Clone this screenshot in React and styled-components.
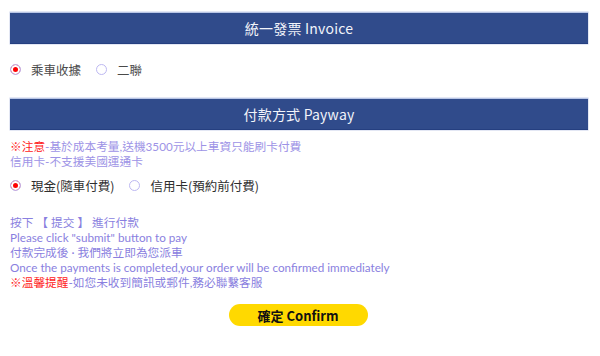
import React, { useState } from "react";
import styled, { createGlobalStyle } from "styled-components";

const GlobalStyle = createGlobalStyle`
    html, body {
        margin: 0;
        padding: 0;
        background: #fff;
    }
    body {
        font-family: Lato, "Noto Sans CJK TC", sans-serif;
    }
`;

const App = () => {
    const [invoice, setInvoice] = useState("receipt");
    const [payway, setPayway] = useState("cash");

    return (
        <>
            <GlobalStyle />
            <Page>
                <SectionBar>統一發票 Invoice</SectionBar>
                <RadioRow>
                    <RadioLabel $gap={15} onClick={() => setInvoice("receipt")}>
                        <RadioDot checked={invoice === "receipt"} />
                        <RadioText>乘車收據</RadioText>
                    </RadioLabel>
                    <RadioLabel onClick={() => setInvoice("duplicate")}>
                        <RadioDot checked={invoice === "duplicate"} />
                        <RadioText>二聯</RadioText>
                    </RadioLabel>
                </RadioRow>

                <SectionBar $top={19}>付款方式 Payway</SectionBar>
                <NoteBlock>
                    <Line><Alert>※注意</Alert>-基於成本考量,送機3500元以上車資只能刷卡付費</Line>
                    <Line>信用卡-不支援美國運通卡</Line>
                </NoteBlock>
                <RadioRow $tight>
                    <RadioLabel $gap={15} onClick={() => setPayway("cash")}>
                        <RadioDot checked={payway === "cash"} />
                        <RadioText $dark>現金(隨車付費)</RadioText>
                    </RadioLabel>
                    <RadioLabel onClick={() => setPayway("card")}>
                        <RadioDot checked={payway === "card"} />
                        <RadioText $dark>信用卡(預約前付費)</RadioText>
                    </RadioLabel>
                </RadioRow>

                <InfoBlock>
                    <Line>按下 【 提交 】 進行付款</Line>
                    <Line>Please click "submit" button to pay</Line>
                    <Line>付款完成後 · 我們將立即為您派車</Line>
                    <Line>Once the payments is completed,your order will be confirmed immediately</Line>
                    <Line><Alert>※溫馨提醒</Alert>-如您未收到簡訊或郵件,務必聯繫客服</Line>
                </InfoBlock>

                <ButtonRow>
                    <ConfirmButton type="button">確定 Confirm</ConfirmButton>
                </ButtonRow>
            </Page>
        </>
    );
};

const Page = styled.div`
    padding: 12px 12px 0 10px;
    display: flex;
    flex-direction: column;
`;

const SectionBar = styled.div`
    margin-top: ${(p) => (p.$top ? p.$top + "px" : "0")};
    height: 30px;
    display: flex;
    align-items: center;
    justify-content: center;
    background-color: #304b8b;
    border-top: 1px solid #b9c6e6;
    border-bottom: 1px solid #253f80;
    box-shadow: 0 0 0 0.5px #c7d0ea;
    color: #f2f4fa;
    font-family: "Noto Sans CJK TC", sans-serif;
    font-size: 14px;
    letter-spacing: 0.2px;
`;

const RadioRow = styled.div`
    display: flex;
    align-items: center;
    margin-top: ${(p) => (p.$tight ? "6px" : "15px")};
    height: 20px;
`;

const RadioLabel = styled.label`
    display: flex;
    align-items: center;
    gap: 10px;
    margin-right: ${(p) => (p.$gap ? p.$gap + "px" : "0")};
    cursor: pointer;
`;

const RadioText = styled.span`
    font-family: "Noto Sans CJK TC", sans-serif;
    font-size: 12.5px;
    color: ${(p) => (p.$dark ? "#2e2e2e" : "#4a4a4a")};
`;

const RadioDot = styled.span`
    box-sizing: border-box;
    width: 11px;
    height: 11px;
    border-radius: 50%;
    border: 1px solid #bdb8f2;
    background: ${(p) => (p.checked ? "#f00" : "#fff")};
    box-shadow: ${(p) => (p.checked ? "inset 0 0 0 2px #fff" : "none")};
`;

const NoteBlock = styled.div`
    margin-top: 9px;
    display: flex;
    flex-direction: column;
    color: #9d93e6;
    font-size: 11.7px;
    line-height: 15px;
`;

const InfoBlock = styled.div`
    margin-top: 20px;
    display: flex;
    flex-direction: column;
    color: #8a7fe0;
    font-size: 11.7px;
    line-height: 15px;
`;

const Line = styled.div`
    white-space: nowrap;
`;

const Alert = styled.span`
    color: #f22;
`;

const ButtonRow = styled.div`
    display: flex;
    justify-content: center;
    margin-top: 14px;
    padding-right: 2px;
`;

const ConfirmButton = styled.button`
    width: 139px;
    height: 22px;
    border: none;
    border-radius: 11px;
    background-color: #ffd900;
    color: #111;
    font-family: "Noto Sans CJK TC", sans-serif;
    font-size: 13px;
    font-weight: 700;
    padding: 0;
    cursor: pointer;
`;

export default App;
